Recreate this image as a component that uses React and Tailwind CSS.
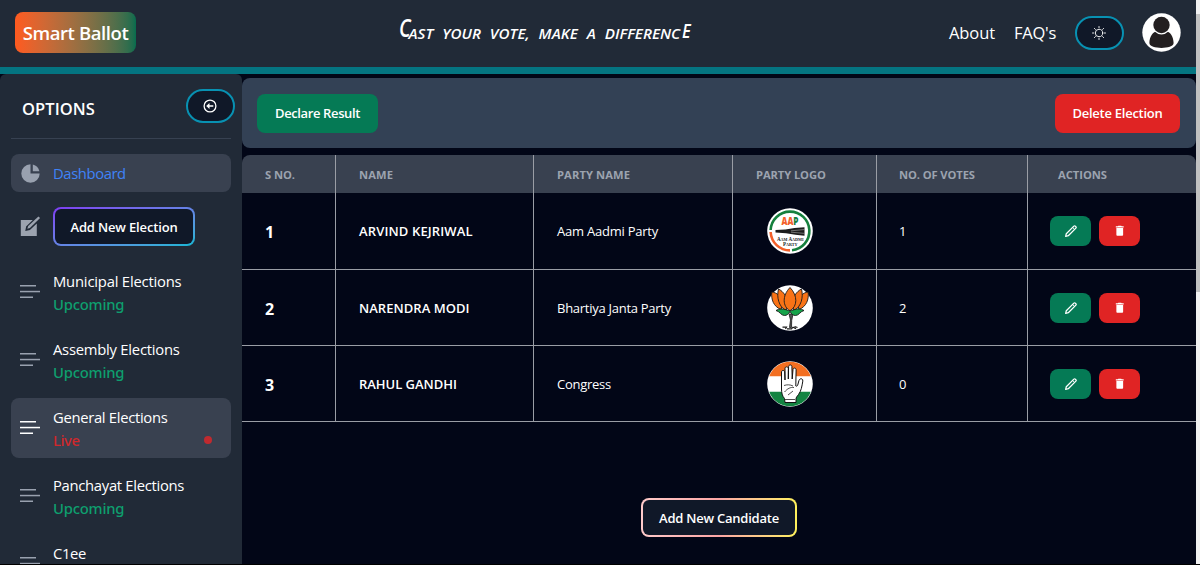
import React from "react";
import { MdDelete } from "react-icons/md";

function PieIcon() {
  return (
    <svg className="size-[23px] shrink-0 fill-gray-400" viewBox="0 0 20 20">
      <path d="M2 10a8 8 0 018-8v8h8a8 8 0 11-16 0z" />
      <path d="M12 2.252A8.014 8.014 0 0117.748 8H12V2.252z" />
    </svg>
  );
}

function ComposeIcon() {
  return (
    <svg className="size-[23px] shrink-0" viewBox="0 0 23 23">
      <path d="M1.800 5h12l-6.700 6.600-.8 4.400 4.600-1 6.900-6.500V21h-16z" fill="#9ca3af" />
      <path d="M8.300 13.700l.9-2.600L19.400 1.500l1.700 1.600-10.200 9.900z" fill="#9ca3af" />
    </svg>
  );
}

function ListIcon({ active }) {
  return (
    <svg className={active ? "mb-[2px] size-[23px] shrink-0 fill-white" : "mb-[2px] size-[23px] shrink-0 fill-gray-400"} viewBox="0 0 23 23">
      <rect x="1" y="5" width="16" height="1.500" />
      <rect x="1" y="10.800" width="20" height="1.500" />
      <rect x="1" y="16.500" width="13" height="1.500" />
    </svg>
  );
}

function BackIcon() {
  return (
    <svg className="size-[14px]" viewBox="0 0 14 14" fill="none" stroke="#fff" strokeWidth="1.300">
      <circle cx="7" cy="7" r="5.900" />
      <path d="M3.200 7l3.300-2.900v5.800z" fill="#fff" stroke="none" />
      <path d="M5.500 7h4.800" strokeWidth="1.500" />
    </svg>
  );
}

function SunIcon() {
  return (
    <svg className="size-[14px]" viewBox="0 0 14 14" fill="none" stroke="#fff" strokeWidth="0.9" strokeLinecap="round">
      <circle cx="7" cy="7" r="3.700" />
      <path d="M7 .5v1.300M7 12.200v1.300M.5 7h1.300M12.200 7h1.300M2.400 2.400l1 1M10.600 10.600l1 1M2.400 11.600l1-1M10.600 3.400l1-1" />
    </svg>
  );
}

function Avatar() {
  return (
    <svg className="size-[39px]" viewBox="0 0 39 39">
      <circle cx="19.500" cy="19.500" r="19.200" fill="#fff" />
      <path d="M7.400 30c0-6.500 3.800-11.500 7.800-12 2.500 2 6.100 2 8.600 0 4.200.5 7.800 5.500 7.800 12 0 6.500-24.200 6.500-24.200 0z" fill="#231f20" />
      <circle cx="19.500" cy="12.200" r="9.200" fill="#fff" />
      <circle cx="19.500" cy="12" r="8.200" fill="#231f20" />
    </svg>
  );
}

function PencilIcon() {
  return (
    <svg className="size-[14px]" viewBox="0 0 14 14" fill="none" stroke="#fff" strokeWidth="1.300" strokeLinejoin="round">
      <path d="M1.700 12.300l.6-2.600L9.900 2.100c.4-.4 1-.4 1.400 0l.6.6c.4.4.4 1 0 1.400L4.300 11.700z" />
      <path d="M8.700 3.500l1.800 1.800" strokeWidth="1" />
    </svg>
  );
}

function AapLogo() {
  return (
    <svg className="size-[46px]" viewBox="0 0 46 46">
      <circle cx="23" cy="23" r="22.800" fill="#fff" />
      <g fill="none" strokeWidth="2.600">
        <path d="M3.600 22A19.400 19.400 0 1 1 25 42.300" stroke="#15803d" />
        <path d="M3.600 24A19.400 19.400 0 0 0 23 42.400" stroke="#f4602a" />
      </g>
      <text x="14.500" y="16.800" fontSize="10.500" fontWeight="800" fontFamily="Open Sans, sans-serif" fill="#f4602a" textLength="17" lengthAdjust="spacingAndGlyphs">
        AA<tspan fill="#15803d">P</tspan>
      </text>
      <path d="M8.500 22l10-.5 9-1.500 10-.7v8.400l-9-1-9.500-1.500-10.500-.8z" fill="#1c1c1c" />
      <path d="M24 22.800l13.500-1.300M24 24.200l13.500 1.200" stroke="#aaa" strokeWidth=".6" />
      <g fontWeight="700" fontFamily="Liberation Serif, serif" fill="#222">
        <text x="10" y="33" fontSize="5.600" textLength="26.500" lengthAdjust="spacingAndGlyphs">A<tspan fontSize="4.600">AM</tspan> A<tspan fontSize="4.600">ADMI</tspan></text>
        <text x="16" y="37.600" fontSize="5.200" textLength="14.500" lengthAdjust="spacingAndGlyphs">P<tspan fontSize="4.400">ARTY</tspan></text>
      </g>
    </svg>
  );
}

function BjpLogo() {
  return (
    <svg className="size-[46px]" viewBox="0 0 46 46">
      <circle cx="23" cy="23" r="22.800" fill="#fff" />
      <path d="M22 29l1.500 6-1 7.500h2l.2-7L26 29z" fill="#555" stroke="#1a1a1a" strokeWidth=".8" />
      <path d="M15.500 42.200h4l-1 1.800M20 43.800h4.500l1.500-1.600 3 1.400M27.500 41.500l3 1" fill="none" stroke="#1a1a1a" strokeWidth="1.200" />
      <g stroke="#1a1a1a" strokeWidth=".9" strokeLinejoin="round">
        <g fill="#f97316">
          <path d="M14 24.500C6.500 21.500 4 14.500 4.800 7c5.200.5 9.200 4.500 11.200 10.500zM32 24.500c7.500-3 10-10 9.200-17.500-5.200.5-9.200 4.500-11.200 10.500z" />
          <path d="M19 25.500C11.500 21.500 9.500 12 11.500 4c5 2.500 9 8 9.500 16zM27 25.500c7.500-4 9.500-13.500 7.500-21.500-5 2.500-9 8-9.500 16z" />
          <path d="M23 25.700c-7.500-4-8-15 0-23.200 8 8.200 7.500 19.200 0 23.200z" />
        </g>
        <path d="M9 25.500c3-2 7-2 11-.5 2 1 4 1 6 0 4-1.500 8-1.500 11 .5-4 1-5 5-8.500 5-2.500 0-4-1.500-5.500-4-1.500 2.500-3 4-5.500 4-3.500 0-4.500-4-8.500-5z" fill="#16a34a" />
      </g>
    </svg>
  );
}

function CongressLogo() {
  return (
    <svg className="size-[46px]" viewBox="0 0 46 46">
      <circle cx="23" cy="23" r="22.800" fill="#fff" />
      <path d="M2.200 15.300a22.100 22.100 0 0 1 41.600 0z" fill="#f36f21" />
      <path d="M2.200 30.700a22.100 22.100 0 0 0 41.600 0z" fill="#138442" />
      <path
        d="M18 41.500l-.5-4c-2.300-2.500-3-6-3-9.500V11c0-2 3-2 3.200 0l.3 8V7.500c0-2.200 3.200-2.200 3.300 0V18l.3-12.500c.1-2 3.200-2 3.300 0L25.200 18l.8-9.500c.2-2 3.200-1.800 3.100.3L28.800 25c.8.500 1.600 0 1.900-.8l1.200-4.500c.7-2.800 4.400-2.500 3.900.4-.8 5-1.600 10-4.300 13.400-1.500 2-2.500 3-2.500 4.500v3.500z"
        fill="#fff"
        stroke="#111"
        strokeWidth="1"
        strokeLinejoin="round"
      />
      <path d="M17 24.500c3-1 6-1 9 .5M17.500 31c3-3.500 6-5 9.500-4.500M21 34l5-4M18 38.500h10" fill="none" stroke="#222" strokeWidth=".8" />
    </svg>
  );
}

const elections = [
  { name: "Municipal Elections", cls: "tracking-[-0.2px]", status: "Upcoming" },
  { name: "Assembly Elections", cls: "tracking-[-0.24px]", status: "Upcoming" },
  { name: "General Elections", cls: "tracking-[-0.31px]", status: "Live" },
  { name: "Panchayat Elections", cls: "tracking-[-0.3px]", status: "Upcoming" },
  { name: "C1ee", cls: "tracking-[-0.35px]" },
];

const columns = [
  { label: "S NO.", cls: "tracking-[-0.05px] pl-[23px]" },
  { label: "NAME", cls: "tracking-[0.09px] pl-[23px]" },
  { label: "PARTY NAME", cls: "tracking-[0.09px] pl-[23px]" },
  { label: "PARTY LOGO", cls: "tracking-[-0.1px] pl-[23px]" },
  { label: "NO. OF VOTES", cls: "tracking-[-0.1px] pl-[22px]" },
  { label: "ACTIONS", cls: "tracking-[-0.03px] pl-[30px]" },
];

const candidates = [
  { no: 1, name: "ARVIND KEJRIWAL", nameCls: "tracking-[0.13px]", party: "Aam Aadmi Party", partyCls: "tracking-[-0.23px]", Logo: AapLogo, votes: 1, row: "h-[77px]" },
  { no: 2, name: "NARENDRA MODI", nameCls: "tracking-[0.04px]", party: "Bhartiya Janta Party", partyCls: "tracking-[-0.27px]", Logo: BjpLogo, votes: 2, row: "h-[76px]" },
  { no: 3, name: "RAHUL GANDHI", nameCls: "tracking-[-0.03px]", party: "Congress", partyCls: "tracking-[-0.26px]", Logo: CongressLogo, votes: 0, row: "h-[76px]" },
];

const grid = "grid grid-cols-[94px_198px_199px_144px_151px_168px]";
const line = "border-r border-[#9a9da5]";
const cell = "flex items-center pt-[2px]";
const pill = "flex h-[34px] w-[49px] items-center justify-center rounded-full border-2 border-[#0891b2] bg-gray-900 pr-px";

function Header() {
  return (
    <header className="flex h-[74px] shrink-0 items-start border-b-[7px] border-[#047481] bg-[#212a37] pl-[15px] text-white">
      <div className="mt-[12px] flex h-[41px] w-[121px] items-center justify-center rounded-lg bg-linear-to-r from-[#ff5a1f] to-[#046c4e] pt-px text-[18.500px] font-semibold tracking-[-0.4px] whitespace-nowrap">
        Smart Ballot
      </div>
      <div className="mt-[17px] ml-[263px] flex h-[32px] w-[293px] items-center text-[15.200px] font-semibold whitespace-nowrap italic">
        <span className="inline-block w-[9.500px] origin-left -translate-y-[6px] scale-x-[0.76] text-[25.500px]">C</span>
        <span className="w-[273px] tracking-[0.03px] [word-spacing:5px]">AST YOUR VOTE, MAKE A DIFFERENC</span>
        <span className="inline-block w-[9px] origin-left -translate-y-[3px] scale-x-[0.8] text-[20.500px]">E</span>
      </div>
      <nav className="mt-[13px] ml-auto flex items-center text-[16.500px] whitespace-nowrap">
        <span className="pt-[2px] tracking-[-0.09px]">About</span>
        <span className="ml-[19px] pt-[2px] tracking-[-0.25px]">FAQ's</span>
        <span className={"ml-[19px] " + pill}>
          <SunIcon />
        </span>
        <span className="mr-[15px] ml-[18px]">
          <Avatar />
        </span>
      </nav>
    </header>
  );
}

function Sidebar() {
  return (
    <aside className="flex w-[242px] shrink-0 flex-col overflow-hidden rounded-t-md bg-[#212a37] px-[11px] text-[14.800px] text-white">
      <div className="flex h-[65px] shrink-0 items-center justify-between border-b border-[#374151] pl-[12px]">
        <span className="mt-[7px] -ml-[1px] text-[16.500px] font-semibold tracking-[0.07px]">OPTIONS</span>
        <span className={"-mr-[4px] " + pill}>
          <BackIcon />
        </span>
      </div>
      <div className="mt-[15px] flex h-[38px] shrink-0 items-center gap-[11px] rounded-lg bg-[#394150] pl-[8px]">
        <PieIcon />
        <span className="pt-px tracking-[-0.4px] text-[#3f83f8]">Dashboard</span>
      </div>
      <div className="mt-[15px] flex h-[39px] shrink-0 items-center gap-[11px] pl-[8px]">
        <ComposeIcon />
        <button className="h-[39px] w-[142px] rounded-lg bg-linear-to-br from-[#7e3af2] to-[#06b6d4] p-[2px]">
          <span className="flex h-full items-center justify-center rounded-md bg-gray-900 pt-[2px] text-[13px] font-semibold tracking-[-0.16px] whitespace-nowrap">
            Add New Election
          </span>
        </button>
      </div>
      <ul className="mt-[16px] flex flex-col gap-[8px]">
        {elections.map((e) => (
          <li key={e.name} className={"flex h-[60px] shrink-0 items-center gap-[11px] rounded-lg pl-[8px] " + (e.status === "Live" ? "bg-[#394150]" : "")}>
            <ListIcon active={e.status === "Live"} />
            <div className="mt-px h-[46px] flex-1 leading-[23px]">
              <p className={e.cls}>{e.name}</p>
              {e.status === "Live" && (
                <p className="flex items-center justify-between pr-[19px] font-['Noto_Sans'] font-medium tracking-[-0.4px] text-[#d0282c]">
                  Live <i className="size-[8px] rounded-full bg-[#c02a2f]" />
                </p>
              )}
              {e.status === "Upcoming" && (
                <p className="font-['Noto_Sans'] font-medium tracking-[-0.2px] text-[#0e9f6e]">Upcoming</p>
              )}
            </div>
          </li>
        ))}
      </ul>
    </aside>
  );
}

function CandidateTable() {
  return (
    <section className="mt-[7px] text-white">
      <div className={grid + " h-[38px] overflow-hidden rounded-t-lg bg-[#394150] text-[11.200px] font-bold text-[#9ca3af]"}>
        {columns.map((c, i) => (
          <div key={c.label} className={"flex items-center pt-[2px] " + c.cls + " " + (i < 5 ? line : "")}>
            {c.label}
          </div>
        ))}
      </div>
      {candidates.map((c) => (
        <div key={c.no} className={grid + " border-b border-[#9a9da5] text-[13px] " + c.row}>
          <div className={cell + " pl-[23px] text-[16px] font-bold " + line}>{c.no}</div>
          <div className={cell + " pl-[23px] font-semibold " + c.nameCls + " " + line}>{c.name}</div>
          <div className={cell + " pl-[23px] " + c.partyCls + " " + line}>{c.party}</div>
          <div className={"flex items-center pl-[34px] " + line}>
            <c.Logo />
          </div>
          <div className={cell + " pl-[22px] " + line}>{c.votes}</div>
          <div className="flex items-center gap-[8px] pl-[22px]">
            <button className="flex h-[30px] w-[41px] items-center justify-center rounded-lg bg-[#057a55]">
              <PencilIcon />
            </button>
            <button className="flex h-[30px] w-[41px] items-center justify-center rounded-lg bg-[#e02424]">
              <MdDelete className="size-[13.500px]" />
            </button>
          </div>
        </div>
      ))}
    </section>
  );
}

export default function App() {
  return (
    <div className="flex h-[565px] w-[1200px] overflow-hidden border-b border-black bg-[#020617] font-['Open_Sans',sans-serif]">
      <div className="flex w-[1196px] flex-col">
        <Header />
        <div className="flex min-h-0 flex-1">
          <Sidebar />
          <main className="flex flex-1 flex-col pt-[4px]">
            <div className="flex h-[70px] items-center justify-between rounded-lg bg-[#334155] pr-[16px] pl-[15px] text-[13px] font-semibold text-white">
              <button className="h-[39px] w-[121px] rounded-lg bg-[#057a55] pt-[2px] tracking-[-0.38px]">Declare Result</button>
              <button className="h-[39px] w-[125px] rounded-lg bg-[#e02424] pt-[2px] tracking-[-0.26px]">Delete Election</button>
            </div>
            <CandidateTable />
            <button className="mt-[76px] ml-[399px] h-[39px] w-[156px] shrink-0 rounded-lg bg-linear-to-r from-[#fecaca] via-[#fca5a5] to-[#fef05a] p-[2px]">
              <span className="flex h-full items-center justify-center rounded-md bg-gray-900 pt-[2px] text-[13px] font-semibold tracking-[-0.23px] whitespace-nowrap text-white">
                Add New Candidate
              </span>
            </button>
          </main>
        </div>
      </div>
      <div className="flex w-[4px] flex-col bg-[#f1f1f1] pt-[14px]">
        <div className="h-[278px] bg-[#c1c1c1]" />
      </div>
    </div>
  );
}
